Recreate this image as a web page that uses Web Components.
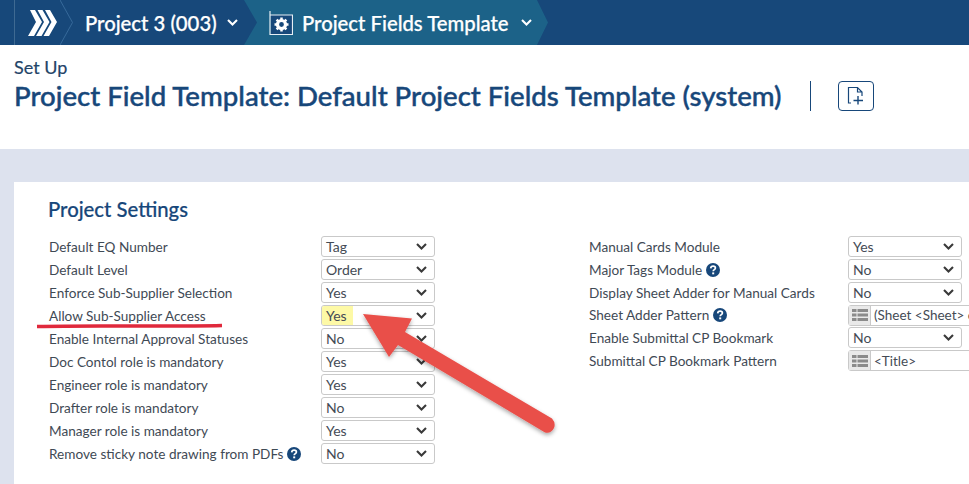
<!DOCTYPE html>
<html>
<head>
<meta charset="utf-8">
<style>
  html, body { margin: 0; height: 484px; overflow: hidden; background: #dde2ee; }
  body { font-family: Lato, "Liberation Sans", sans-serif; position: relative; }
</style>
</head>
<body>
<top-bar>
  <bar-crumb>Project 3 (003)</bar-crumb>
  <bar-crumb active>Project Fields Template</bar-crumb>
</top-bar>
<page-header eyebrow="Set Up" heading="Project Field Template: Default Project Fields Template (system)"></page-header>
<settings-card heading="Project Settings">
  <field-column slot="left">
    <field-row label="Default EQ Number"><select-box value="Tag"></select-box></field-row>
    <field-row label="Default Level"><select-box value="Order"></select-box></field-row>
    <field-row label="Enforce Sub-Supplier Selection"><select-box value="Yes"></select-box></field-row>
    <field-row label="Allow Sub-Supplier Access"><select-box value="Yes" marked></select-box></field-row>
    <field-row label="Enable Internal Approval Statuses"><select-box value="No"></select-box></field-row>
    <field-row label="Doc Contol role is mandatory"><select-box value="Yes"></select-box></field-row>
    <field-row label="Engineer role is mandatory"><select-box value="Yes"></select-box></field-row>
    <field-row label="Drafter role is mandatory"><select-box value="No"></select-box></field-row>
    <field-row label="Manager role is mandatory"><select-box value="Yes"></select-box></field-row>
    <field-row label="Remove sticky note drawing from PDFs" help><select-box value="No"></select-box></field-row>
  </field-column>
  <field-column slot="right" wide>
    <field-row label="Manual Cards Module"><select-box value="Yes"></select-box></field-row>
    <field-row label="Major Tags Module" help><select-box value="No"></select-box></field-row>
    <field-row label="Display Sheet Adder for Manual Cards"><select-box value="No"></select-box></field-row>
    <field-row label="Sheet Adder Pattern" help short><pattern-input value="(Sheet &lt;Sheet&gt; of &lt;Sheets&gt;)"></pattern-input></field-row>
    <field-row label="Enable Submittal CP Bookmark"><select-box value="No"></select-box></field-row>
    <field-row label="Submittal CP Bookmark Pattern"><pattern-input value="&lt;Title&gt;"></pattern-input></field-row>
  </field-column>
</settings-card>
<arrow-markup></arrow-markup>

<script>
const chevron = /* html */ `
  <svg width="11" height="7" viewBox="0 0 11 7" fill="none" stroke="currentColor" stroke-width="2.1">
    <path d="M1 1l4.5 4.5L10 1"/>
  </svg>`;

class TopBar extends HTMLElement {
  constructor() {
    super();
    this.attachShadow({ mode: 'open' });
    this.shadowRoot.innerHTML = /* html */ `
    <style>
      :host {
        display: flex;
        height: 45px;
        background: #17487a;
        color: #fff;
      }
      .brand {
        width: 46px;
        box-sizing: border-box;
        margin-left: 14px;
        padding-left: 13px;
        border-left: 1px solid #3f6a92;
        display: flex;
        align-items: center;
      }
      .sep { flex: none; }
    </style>
    <div class="brand">
      <svg width="29" height="26" viewBox="0 0 29 26" fill="#fff" style="flex:none">
        <path d="M2 0h5l7 12-8 14H0l8-14z"/>
        <path d="M9.500 0h5l7 12-8 14H8l8-14z"/>
        <path d="M17 0h5l7 12-8 14h-5.500l8-14z"/>
      </svg>
    </div>
    <svg class="sep" width="13" height="45" viewBox="0 0 13 45" fill="none" stroke="#36699a" stroke-width="1">
      <path d="M0 0l12.500 22.500L0 45"/>
    </svg>
    <slot></slot>`;
  }
}

class BarCrumb extends HTMLElement {
  constructor() {
    super();
    this.attachShadow({ mode: 'open' });
    this.shadowRoot.innerHTML = /* html */ `
    <style>
      :host {
        display: flex;
        align-items: center;
        box-sizing: border-box;
        height: 45px;
        width: 184px;
        padding-left: 12px;
        font-size: 20.300px;
        font-weight: 500;
        white-space: nowrap;
        -webkit-text-stroke: .25px #fff;
      }
      :host([active]) {
        width: 304px;
        margin-left: -13px;
        padding-left: 25px;
        background: #1c6288;
        clip-path: polygon(0 0, calc(100% - 11px) 0, 100% 50%, calc(100% - 11px) 100%, 0 100%, 13px 50%);
      }
      .cog { display: none; margin-right: 9px; flex: none; }
      :host([active]) .cog { display: block; }
      .chev { margin-left: 10px; display: flex; }
      :host([active]) .chev { margin-left: 12px; }
    </style>
    <svg class="cog" width="24" height="24" viewBox="0 0 24 24" fill="none">
      <rect x="2" y="4" width="21" height="19" fill="#17487a"/>
      <path d="M1 0v23.500H23.500V4H1" stroke="#e6eef4" stroke-width="1.200"/>
      <circle cx="12.500" cy="13.500" r="4" stroke="#fff" stroke-width="3.200"/>
      <path d="M12.500 6.500v3M12.500 17.500v3M5.500 13.500h3M16.500 13.500h3M7.600 8.600l2.100 2.100M15.300 16.300l2.100 2.100M7.600 18.400l2.100-2.100M15.300 10.700l2.100-2.100" stroke="#fff" stroke-width="2.500"/>
    </svg>
    <slot></slot>
    <span class="chev">${chevron}</span>`;
  }
}

class PageHeader extends HTMLElement {
  constructor() {
    super();
    this.attachShadow({ mode: 'open' });
  }

  connectedCallback() {
    this.shadowRoot.innerHTML = /* html */ `
    <style>
      :host {
        display: block;
        box-sizing: border-box;
        height: 104px;
        padding: 12px 0 0 14px;
        background: #fff;
        color: #17477a;
      }
      .eyebrow { font-size: 18px; line-height: 21px; color: #1f4468; -webkit-text-stroke: .2px #1f4468; }
      .line { display: flex; align-items: center; margin-top: 0; }
      h1 {
        margin: 0;
        font-size: 27.600px;
        font-weight: 500;
        line-height: 36px;
        white-space: nowrap;
        -webkit-text-stroke: .45px #17477a;
      }
      .rule { width: 1px; height: 30px; background: #17477a; margin: 0 27px 0 28px; }
      .doc {
        width: 36px;
        height: 30px;
        box-sizing: border-box;
        border: 1px solid #17477a;
        border-radius: 4px;
        display: grid;
        place-items: center;
      }
    </style>
    <div class="eyebrow">${this.getAttribute('eyebrow')}</div>
    <div class="line">
      <h1>${this.getAttribute('heading')}</h1>
      <div class="rule"></div>
      <div class="doc">
        <svg width="18" height="20" viewBox="0 0 18 20" fill="none" stroke="#17477a" stroke-width="1.200">
          <path d="M4 17H1.500V1.500H10.500L15 6V10M10.500 1.500V6H15"/>
          <path d="M11 10v8.500M6.500 14.500H16" stroke-width="1.400"/>
        </svg>
      </div>
    </div>`;
  }
}

class SettingsCard extends HTMLElement {
  constructor() {
    super();
    this.attachShadow({ mode: 'open' });
  }

  connectedCallback() {
    this.shadowRoot.innerHTML = /* html */ `
    <style>
      :host {
        display: block;
        box-sizing: border-box;
        width: 1100px;
        height: 320px;
        margin: 33px 0 0 14px;
        padding: 14px 0 0 34px;
        background: #fff;
      }
      h2 {
        margin: 0 0 13px;
        font-size: 20.300px;
        font-weight: 500;
        line-height: 26px;
        color: #17477a;
        -webkit-text-stroke: .2px #17477a;
      }
      .cols { display: flex; gap: 153px; }
    </style>
    <h2>${this.getAttribute('heading')}</h2>
    <div class="cols">
      <slot name="left"></slot>
      <slot name="right"></slot>
    </div>`;
  }
}

class FieldColumn extends HTMLElement {
  constructor() {
    super();
    this.attachShadow({ mode: 'open' });
    this.shadowRoot.innerHTML = /* html */ `
    <style>
      :host {
        display: flex;
        flex-direction: column;
        --label-width: 273px;
        --label-pad: 1px;
        width: 388px;
      }
      :host([wide]) { --label-width: 259px; --label-pad: 0; width: 500px; }
    </style>
    <slot></slot>`;
  }
}

class FieldRow extends HTMLElement {
  constructor() {
    super();
    this.attachShadow({ mode: 'open' });
  }

  connectedCallback() {
    const help = this.hasAttribute('help') ? /* html */ `
      <svg class="help" width="14" height="14" viewBox="0 0 14 14">
        <circle cx="7" cy="7" r="7" fill="#17477a"/>
        <path d="M4.700 5.400C4.800 4 5.800 3.200 7.100 3.200C8.400 3.200 9.400 4 9.400 5.100C9.400 6.700 7.200 6.600 7.200 8.300" fill="none" stroke="#fff" stroke-width="1.700"/>
        <rect x="6.200" y="9.400" width="2" height="1.900" fill="#fff"/>
      </svg>` : '';
    this.shadowRoot.innerHTML = /* html */ `
    <style>
      :host {
        display: grid;
        grid-template-columns: var(--label-width) 1fr;
        align-items: center;
        height: 23px;
      }
      :host([short]) { height: 22px; }
      .label {
        padding-left: var(--label-pad);
        font-size: 13.600px;
        color: #3f4a55;
        white-space: nowrap;
        display: flex;
        align-items: center;
        gap: 4px;
      }
    </style>
    <div class="label">${this.getAttribute('label')}${help}</div>
    <slot></slot>`;
  }
}

class SelectBox extends HTMLElement {
  constructor() {
    super();
    this.attachShadow({ mode: 'open' });
  }

  connectedCallback() {
    this.shadowRoot.innerHTML = /* html */ `
    <style>
      :host {
        display: flex;
        align-items: center;
        justify-content: space-between;
        box-sizing: border-box;
        width: 114px;
        height: 21px;
        border: 1px solid #c9c9c9;
        border-radius: 3px;
        background: #fff;
        color: #444b55;
        font-size: 14px;
        overflow: hidden;
      }
      .value { padding: 0 4px; line-height: 19px; }
      :host([marked]) .value { background: #fdf9a6; padding-right: 6px; height: 19px; }
      .chev { display: flex; margin-right: 7px; color: #3a3a3a; }
    </style>
    <span class="value">${this.getAttribute('value')}</span>
    <span class="chev">${chevron}</span>`;
  }
}

class PatternInput extends HTMLElement {
  constructor() {
    super();
    this.attachShadow({ mode: 'open' });
  }

  connectedCallback() {
    const value = this.getAttribute('value').replace(/</g, '&lt;');
    this.shadowRoot.innerHTML = /* html */ `
    <style>
      :host {
        display: flex;
        align-items: center;
        box-sizing: border-box;
        width: 200px;
        height: 21px;
        border: 1px solid #c9c9c9;
        border-radius: 3px;
        background: #fff;
        color: #444b55;
        font-size: 13.500px;
        white-space: nowrap;
      }
      .addon {
        width: 21px;
        height: 19px;
        flex: none;
        display: grid;
        place-items: center;
        background: #e9e9e9;
        border-right: 1px solid #c9c9c9;
      }
      .value { padding-left: 3px; }
    </style>
    <span class="addon">
      <svg width="16" height="12" viewBox="0 0 16 12" fill="#8b8b8b">
        <path d="M0 0h4.500v3H0zM5.500 0H16v3H5.500zM0 4.500h4.500v3H0zM5.500 4.500H16v3H5.500zM0 9h4.500v3H0zM5.500 9H16v3H5.500z"/>
      </svg>
    </span>
    <span class="value">${value}</span>`;
  }
}

// red markup drawn on top of the screenshot
class ArrowMarkup extends HTMLElement {
  constructor() {
    super();
    this.attachShadow({ mode: 'open' });
    this.shadowRoot.innerHTML = /* html */ `
    <style>
      :host { position: absolute; left: 0; top: 0; pointer-events: none; }
      svg { display: block; overflow: visible; }
    </style>
    <svg width="969" height="484" viewBox="0 0 969 484">
      <defs>
        <filter id="shade" x="-10%" y="-10%" width="120%" height="120%">
          <feDropShadow dx="0" dy="2" stdDeviation="2" flood-color="#000" flood-opacity=".35"/>
        </filter>
      </defs>
      <path d="M37 326.500C100 325 160 327 222 325.500" fill="none" stroke="#e0293c" stroke-width="3.500"/>
      <path filter="url(#shade)" fill="#e94f4a" d="M363 314L412 318.500L405 332L552 418.500Q556 423 554 428Q551 434 545 432.500L398 345L389 357Z"/>
    </svg>`;
  }
}

customElements.define('top-bar', TopBar);
customElements.define('bar-crumb', BarCrumb);
customElements.define('page-header', PageHeader);
customElements.define('settings-card', SettingsCard);
customElements.define('field-column', FieldColumn);
customElements.define('field-row', FieldRow);
customElements.define('select-box', SelectBox);
customElements.define('pattern-input', PatternInput);
customElements.define('arrow-markup', ArrowMarkup);
</script>
</body>
</html>
